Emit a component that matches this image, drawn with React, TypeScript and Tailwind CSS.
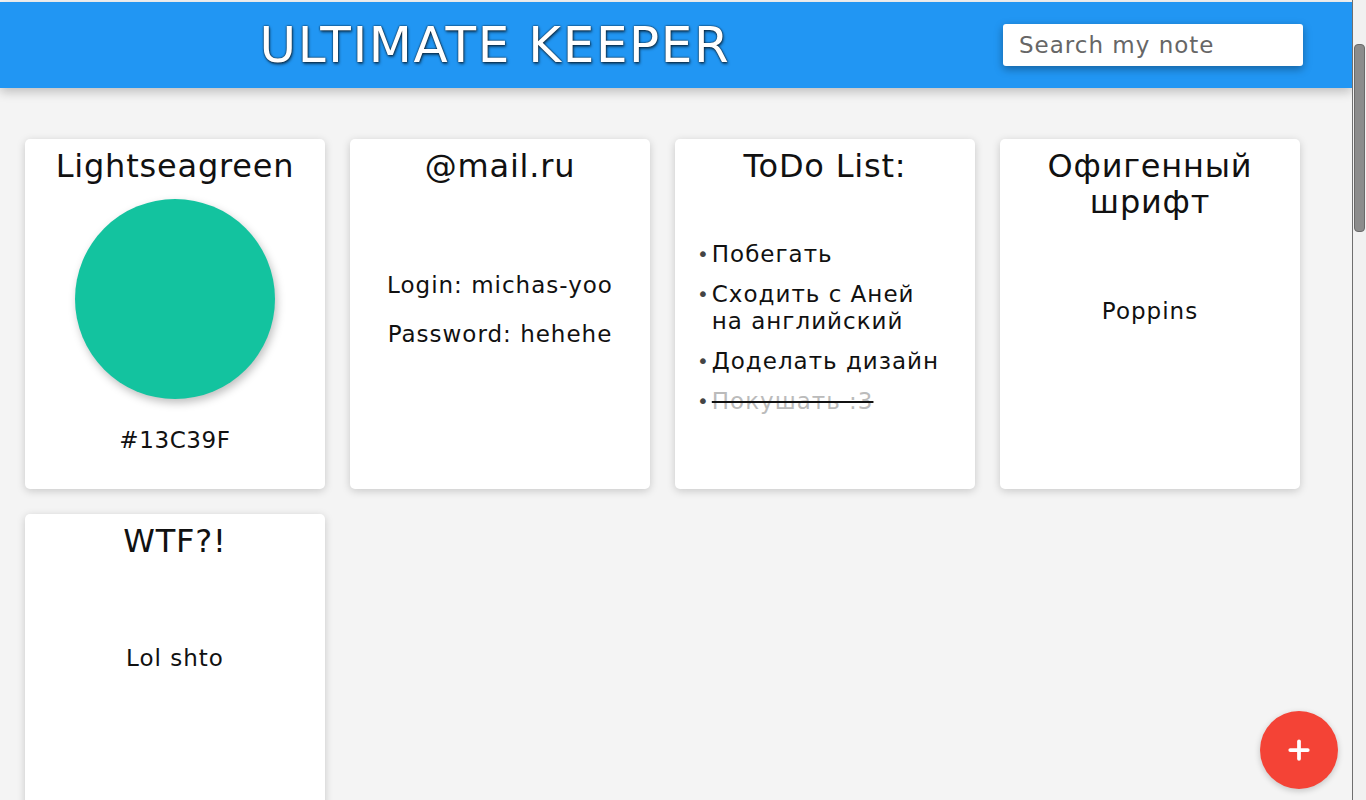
import { Plus } from "lucide-react";

const font = "font-['DejaVu_Sans','Noto_Sans',sans-serif]";

function Card({ children }: { children: React.ReactNode }) {
  return (
    <div className="h-[350px] w-[300px] shrink-0 rounded-[5px] bg-white px-4 pt-[9px] text-center text-[#111] shadow-[0_2px_8px_rgba(0,0,0,0.18)]">
      {children}
    </div>
  );
}

function Title({ children }: { children: React.ReactNode }) {
  return <h2 className="text-[32px] leading-[36px] tracking-[0.8px]">{children}</h2>;
}

const todos = [
  { text: "Побегать", done: false },
  { text: "Сходить с Аней на английский", done: false },
  { text: "Доделать дизайн", done: false },
  { text: "Покушать :3", done: true },
];

export default function App() {
  return (
    <div className={`min-h-screen bg-[#f4f4f4] pt-[2px] pr-[14px] ${font}`}>
      <header className="relative z-10 flex h-[86px] items-center bg-[#2196f3] shadow-[0_4px_10px_rgba(0,0,0,0.22)]">
        <div className="w-[990px] text-center">
          <h1 className="text-[50px] leading-none tracking-[1.6px] text-white [text-shadow:0_0_2px_#000,1px_2px_3px_rgba(0,0,0,0.55)]">
            ULTIMATE KEEPER
          </h1>
        </div>
        <input
          placeholder="Search my note"
          className="ml-[13px] h-[42px] w-[300px] rounded-[3px] bg-white px-4 text-[23px] tracking-[1px] text-[#333] shadow-[0_3px_8px_rgba(0,0,0,0.35)] outline-none placeholder:text-[#666]"
        />
      </header>

      <main className="flex flex-wrap gap-[25px] px-[25px] pt-[51px]">
        <Card>
          <Title>Lightseagreen</Title>
          <div className="mx-auto mt-[15px] h-[200px] w-[200px] rounded-full bg-[#13c39f] shadow-[2px_4px_8px_rgba(0,0,0,0.25)]" />
          <p className="mt-[24px] text-[23px] tracking-[0.6px]">#13C39F</p>
        </Card>

        <Card>
          <Title>@mail.ru</Title>
          <div className="mt-[87px] space-y-[21px] text-[23px] leading-[28px] tracking-[1px]">
            <p>Login: michas-yoo</p>
            <p>Password: hehehe</p>
          </div>
        </Card>

        <Card>
          <Title>ToDo List:</Title>
          <ul className="mt-[57px] space-y-[13px] pr-[14px] pl-[6px] text-left text-[23px] leading-[27px] tracking-[1px]">
            {todos.map((t) => (
              <li key={t.text} className="flex gap-[2px]">
                <span className="text-[20px] leading-[27px] text-[#444]">•</span>
                <span className={t.done ? "text-[#bbb] line-through decoration-[#111]" : ""}>{t.text}</span>
              </li>
            ))}
          </ul>
        </Card>

        <Card>
          <Title>Офигенный шрифт</Title>
          <p className="mt-[77px] text-[23px] leading-[28px] tracking-[1px]">Poppins</p>
        </Card>

        <Card>
          <Title>WTF?!</Title>
          <p className="mt-[85px] text-[23px] leading-[28px] tracking-[1px]">Lol shto</p>
        </Card>
      </main>

      <button className="fixed bottom-[11px] right-[28px] flex h-[78px] w-[78px] items-center justify-center rounded-full bg-[#f44336] text-white shadow-[0_2px_6px_rgba(0,0,0,0.2)]">
        <Plus size={30} strokeWidth={3} />
      </button>

      {/* page scrollbar as in the screenshot */}
      <div className="fixed top-0 right-0 z-20 h-screen w-[14px] border-l border-[#6f6f6f] bg-[#f1f1f1] px-[1px] pt-[44px]">
        <div className="h-[188px] rounded-[4px] border border-[#6a6a6a] bg-[#8c8c8c]" />
      </div>
    </div>
  );
}
